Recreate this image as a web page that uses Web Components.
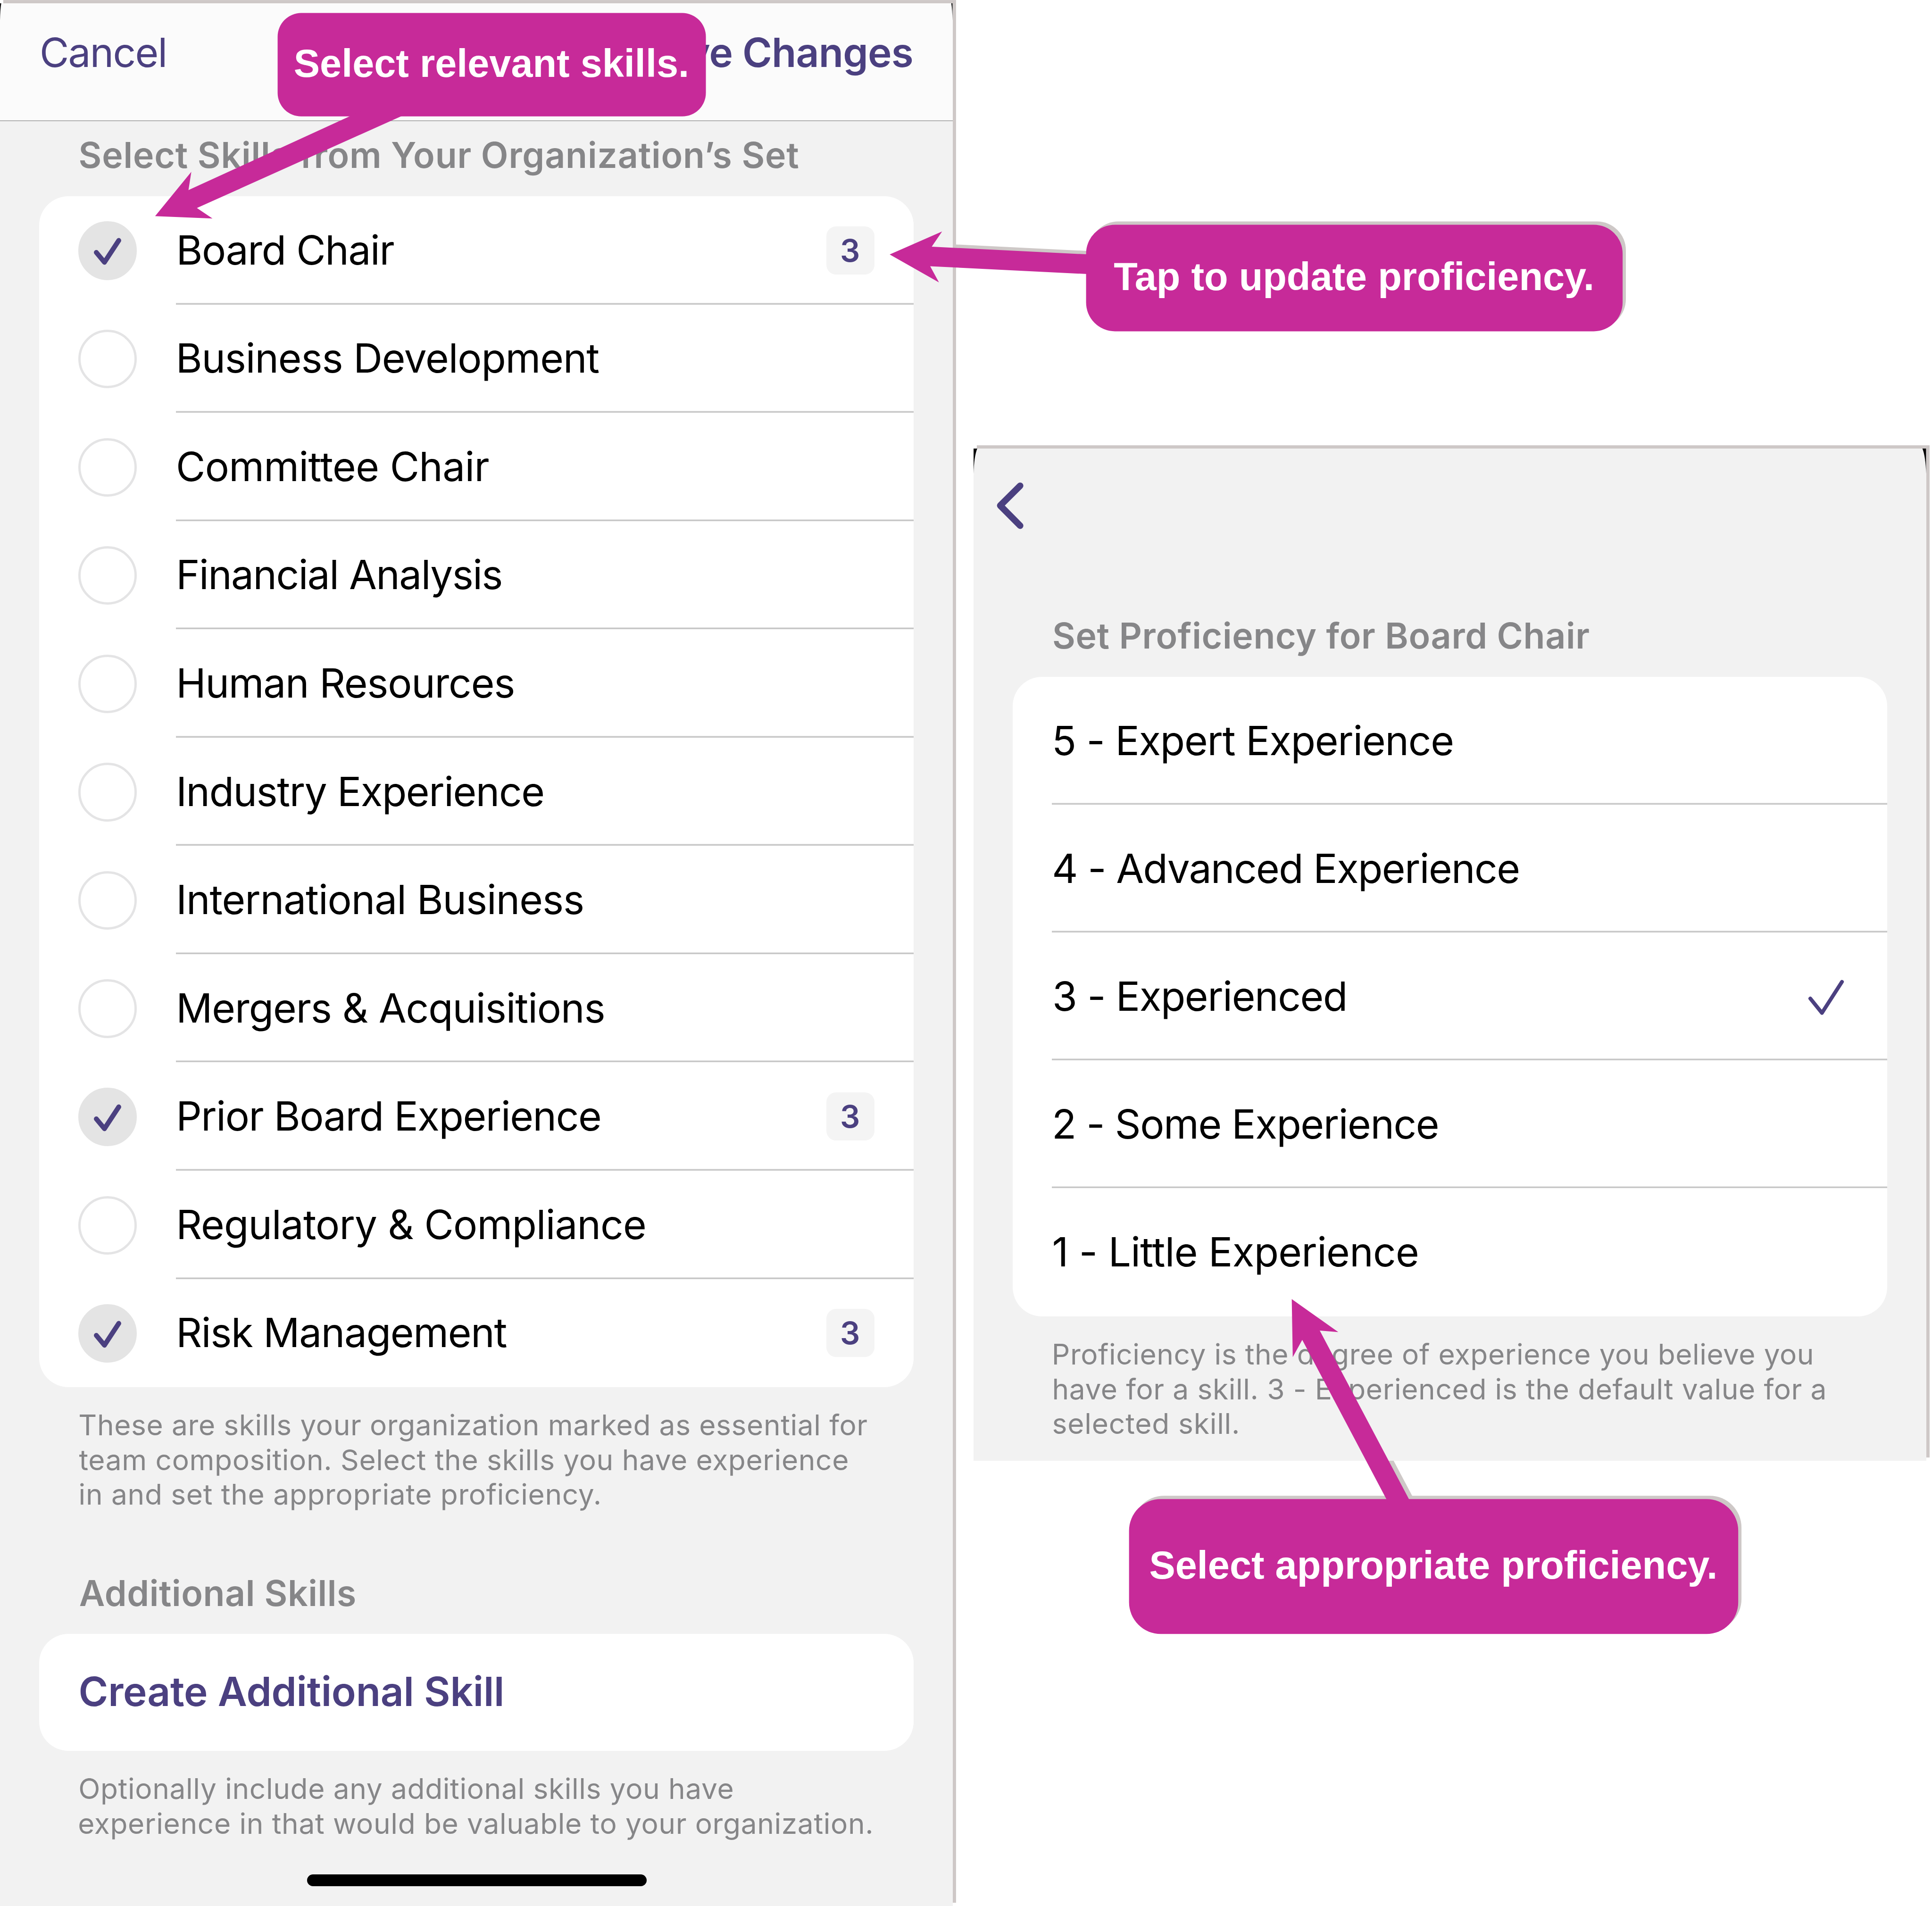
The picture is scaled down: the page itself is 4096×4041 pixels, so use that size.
<!DOCTYPE html>
<html lang="en">
<head>
<meta charset="utf-8">
<title>Skills and proficiency</title>
<style>
  /* 1rem is 100 design units; the design is 4746 x 4682 units */
  html { font-size: 86.3043px; }
  body { margin: 0; background: #fff; overflow: hidden; font-family: Inter, "Liberation Sans", sans-serif; font-optical-sizing: none; }
</style>
</head>
<body>
<skills-guide></skills-guide>
<script>
const UNIT = parseFloat(getComputedStyle(document.documentElement).fontSize) / 100;
const pen = document.createElement('canvas').getContext('2d');

class Base extends HTMLElement {
  render(css, html) {
    if (!this.shadowRoot) this.attachShadow({ mode: 'open' });
    this.shadowRoot.innerHTML = '<style>' + css + '</style>' + html;
  }
}

/* One line of text, tracked so that its glyphs run from `start` over `span` units */
class TextRun extends Base {
  connectedCallback() {
    this.render(':host{display:block;white-space:pre;width:max-content} span{display:inline-block}', '<span><slot></slot></span>');
    const text = this.textContent, cs = getComputedStyle(this);
    const probe = this.getAttribute('sample') || text;
    pen.font = cs.fontWeight + ' ' + cs.fontSize + ' ' + cs.fontFamily;
    const m = pen.measureText(probe);
    const span = parseFloat(this.getAttribute('span'));
    if (span) {
      const ink = m.actualBoundingBoxLeft + m.actualBoundingBoxRight;
      this.style.letterSpacing = ((span * UNIT - ink) / (probe.length - 1)).toFixed(3) + 'px';
    }
    const start = this.getAttribute('start');
    if (start !== null) this.style.marginLeft = (start * UNIT + m.actualBoundingBoxLeft).toFixed(2) + 'px';
  }
}

class NavBar extends Base {
  connectedCallback() {
    this.render(`:host{display:flex;box-sizing:border-box;height:2.9rem;padding-bottom:.47rem;background:#fbfbfb;border-bottom:.03rem solid #b2b2b2;
      align-items:center;justify-content:space-between;color:#4b4080;font-size:.99rem;padding-right:.97rem}
      .b{font-weight:600}`,
      `<text-run start="103" span="302">Cancel</text-run><text-run class="b" sample="e Changes" span="495">ve Changes</text-run>`);
  }
}

class BackBar extends Base {
  connectedCallback() {
    this.render(`:host{display:flex;height:4.035rem;box-sizing:border-box;padding:.8rem 0 0 .54rem} svg{width:.7rem;height:1.2rem}`,
      `<svg viewBox="0 0 70 120"><path d="M60 11.4 11 60 60 109.500" fill="none" stroke="#4b4080" stroke-width="16" stroke-linecap="round" stroke-linejoin="round"/></svg>`);
  }
}

class SectionTitle extends Base {
  connectedCallback() {
    this.render(`:host{display:block;height:1.1rem;line-height:1.13rem;font-size:.87rem;font-weight:600;color:#868688}`, '<slot></slot>');
  }
}

class SectionNote extends Base {
  connectedCallback() {
    this.render(`:host{display:flex;flex-direction:column;line-height:.853rem;font-size:.7rem;color:#868688}`, '<slot></slot>');
  }
}

class ListCard extends Base {
  connectedCallback() {
    this.render(`:host{display:flex;flex-direction:column;margin:.47rem .96rem 0;border-radius:.72rem;background:#fff;overflow:hidden}`, '<slot></slot>');
  }
}

class SkillRow extends Base {
  connectedCallback() {
    const level = this.getAttribute('level');
    this.render(`:host{display:flex;height:2.66rem;align-items:center;padding-left:.96rem;font-size:.99rem;color:#000}
      .ring{flex:none;box-sizing:border-box;width:1.44rem;height:1.44rem;border:.06rem solid #e4e4e5;border-radius:50%;margin-top:.02rem}
      .on{background:#e4e4e4;border-color:#e4e4e4}
      svg{display:block;width:1.32rem;height:1.32rem}
      .main{flex:1;display:flex;align-items:center;justify-content:space-between;height:100%;box-sizing:border-box;margin-left:.96rem;padding-right:.96rem;line-height:2.71rem}
      :host(:not(:last-child)) .main{box-shadow:inset 0 -.04rem #c8c8c8}
      .level{display:flex;align-items:center;justify-content:center;width:1.18rem;height:1.18rem;line-height:1.18rem;box-sizing:border-box;padding:.02rem .02rem 0 0;border-radius:.24rem;background:#f4f4f4;color:#4b4080;font-size:.77rem;font-weight:600}`,
      `<div class="ring ${level ? 'on' : ''}">${level ? '<svg viewBox="1 1 132 132"><path d="M39.500 72 59.500 96 94.600 42.500" fill="none" stroke="#4b4080" stroke-width="12" stroke-linecap="round" stroke-linejoin="round"/></svg>' : ''}</div>
       <div class="main"><slot></slot>${level ? `<span class="level">${level}</span>` : ''}</div>`);
  }
}

class LevelRow extends Base {
  connectedCallback() {
    this.render(`:host{display:flex;height:3.142rem}
      .main{flex:1;display:flex;align-items:center;justify-content:space-between;margin-left:.96rem;padding-right:.985rem;font-size:.99rem;height:3.142rem;line-height:3.17rem;color:#000}
      :host(:not(:last-child)) .main{box-shadow:inset 0 -.04rem #c8c8c8}
      svg{width:1rem;height:1rem}`,
      `<div class="main"><slot></slot>${this.hasAttribute('selected') ? '<svg viewBox="0 0 100 100"><path d="M9.300 76 37.800 111.400 87 35" transform="translate(0 -21.500)" fill="none" stroke="#4b4080" stroke-width="9.300" stroke-linecap="round" stroke-linejoin="round"/></svg>' : ''}</div>`);
  }
}

class PhoneScreen extends Base {
  connectedCallback() {
    this.render(`:host{display:flex;flex-direction:column;position:relative;z-index:1;flex:none;width:23.4rem;background:#f2f2f2;box-shadow:.08rem -.08rem #cec8c7}
      svg{position:absolute;top:0;left:0;width:23.4rem;height:.65rem}`,
      `<slot></slot><svg viewBox="0 0 2340 65"><path d="${this.getAttribute('corners')}"/></svg>`);
  }
}

class HomeBar extends Base {
  connectedCallback() {
    this.render(`:host{display:block;width:8.34rem;height:.29rem;border-radius:.145rem;background:#000;margin:.82rem 0 0 7.54rem}`, '');
  }
}

const CALLOUTS = `<rect x="682" y="32" width="1052" height="254" rx="58"/>
  <path d="M381 531 470 422 463 467 891 271H1018L483.700 511 522 536.700Z"/>
  <rect x="2668" y="552" width="1318" height="262" rx="71"/>
  <path d="M2185.500 625 2314.300 568.700 2288.800 606 2690 625.800V674.200L2285 654 2306.600 693.700Z"/>
  <rect x="2773.500" y="3682.500" width="1496.500" height="331.500" rx="78"/>
  <path d="M3173.200 3191.300 3287.600 3272.400 3242 3268.600 3471.600 3702.500H3416.200L3199 3291.600 3175.700 3333.700Z"/>`;

/* Bubbles and arrows; the shade copy lies below the screens, offset up and right */
class CalloutShapes extends Base {
  connectedCallback() {
    const shade = this.hasAttribute('shade');
    this.render(`:host{position:absolute;left:0;top:0;z-index:${shade ? 0 : 2}} svg{display:block;width:47.46rem;height:46.82rem}`,
      `<svg viewBox="0 0 4746 4682"><g fill="${shade ? '#cec8c7' : '#c72a99'}" ${shade ? 'transform="translate(8 -8)"' : ''}>${CALLOUTS}</g></svg>`);
  }
}

class CalloutText extends Base {
  connectedCallback() {
    this.render(`:host{position:absolute;z-index:3;display:flex;align-items:center;box-sizing:border-box;padding-bottom:.06rem;color:#fff;font:bold .96rem "Liberation Sans",Arial,sans-serif}`, '<slot></slot>');
  }
}

class SkillsGuide extends Base {
  connectedCallback() {
    const skills = [['Board Chair', 441, 968, 3], ['Business Development', 440, 1472], ['Committee Chair', 438, 1201], ['Financial Analysis', 440.5, 1231],
      ['Human Resources', 440.5, 1261], ['Industry Experience', 440.5, 1334], ['International Business', 440.5, 1431], ['Mergers &amp; Acquisitions', 440.5, 1482.5],
      ['Prior Board Experience', 440.5, 1474, 3], ['Regulatory &amp; Compliance', 440.5, 1584], ['Risk Management', 440.5, 1245, 3]];
    const levels = [['5 - Expert Experience', 2591, 3568], ['4 - Advanced Experience', 2590, 3730], ['3 - Experienced', 2591, 3303.5],
      ['2 - Some Experience', 2591, 3531.5], ['1 - Little Experience', 2589, 3482]];
    const run = (t, a, b, origin) => `<text-run start="${a - origin}" span="${b - a}">${t}</text-run>`;
    this.render(`:host{display:block;position:relative;width:47.46rem;height:46.82rem;overflow:hidden}
      .board{display:flex;align-items:flex-start;gap:.52rem}
      .a{margin-top:.08rem;height:46.74rem}
      .b{margin-top:11.02rem;height:24.86rem}
      .create{height:2.87rem;line-height:2.84rem;font-size:.99rem;font-weight:600;color:#4b4080}
      .c1{left:6.82rem;top:.32rem;height:2.54rem}
      .c2{left:26.68rem;top:5.52rem;height:2.62rem}
      .c3{left:27.735rem;top:36.825rem;height:3.315rem}`,
      `<callout-shapes shade></callout-shapes>
      <div class="board">
        <phone-screen class="a" corners="M0 0H3Q.5 15 0 42ZM2340 0H2337Q2339.500 15 2340 42Z">
          <nav-bar></nav-bar>
          <section-title style="margin-top:.27rem">${run('Select Skills from Your Organization’s Set', 196.5, 1962, 0)}</section-title>
          <list-card>${skills.map(s => `<skill-row ${s[3] ? `level="${s[3]}"` : ''}>${run(s[0], s[1], s[2], 432)}</skill-row>`).join('')}</list-card>
          <section-note style="margin-top:.508rem">${run('These are skills your organization marked as essential for', 195, 2130, 0)}${run('team composition. Select the skills you have experience', 194, 2082.5, 0)}${run('in and set the appropriate proficiency.', 196.5, 1472.5, 0)}</section-note>
          <section-title style="margin-top:1.425rem">${run('Additional Skills', 195.5, 872.5, 0)}</section-title>
          <list-card><div class="create">${run('Create Additional Skill', 197.5, 1233, 96)}</div></list-card>
          <section-note style="margin-top:.515rem">${run('Optionally include any additional skills you have', 196, 1800, 0)}${run('experience in that would be valuable to your organization.', 195, 2140.5, 0)}</section-note>
          <home-bar></home-bar>
        </phone-screen>
        <phone-screen class="b" corners="M0 0H9Q1 20 0 62ZM2340 0H2331Q2339 20 2340 62Z">
          <back-bar></back-bar>
          <section-title>${run('Set Proficiency for Board Chair', 2588.5, 3904, 2392)}</section-title>
          <list-card>${levels.map((l, i) => `<level-row ${i === 2 ? 'selected' : ''}>${run(l[0], l[1], l[2], 2584)}</level-row>`).join('')}</list-card>
          <section-note style="margin-top:.515rem">${run('Proficiency is the degree of experience you believe you', 2589.5, 4451.5, 2392)}${run('have for a skill. 3 - Experienced is the default value for a', 2589, 4482.5, 2392)}${run('selected skill.', 2588, 3040.5, 2392)}</section-note>
        </phone-screen>
      </div>
      <callout-shapes></callout-shapes>
      <callout-text class="c1"><text-run start="42">Select relevant skills.</text-run></callout-text>
      <callout-text class="c2"><text-run start="68">Tap to update proficiency.</text-run></callout-text>
      <callout-text class="c3"><text-run start="52">Select appropriate proficiency.</text-run></callout-text>`);
  }
}

for (const [tag, cls] of [['nav-bar', NavBar], ['back-bar', BackBar], ['section-title', SectionTitle], ['section-note', SectionNote], ['list-card', ListCard],
  ['skill-row', SkillRow], ['level-row', LevelRow], ['phone-screen', PhoneScreen], ['home-bar', HomeBar], ['callout-shapes', CalloutShapes],
  ['callout-text', CalloutText], ['skills-guide', SkillsGuide], ['text-run', TextRun]]) customElements.define(tag, cls);
</script>
</body>
</html>
